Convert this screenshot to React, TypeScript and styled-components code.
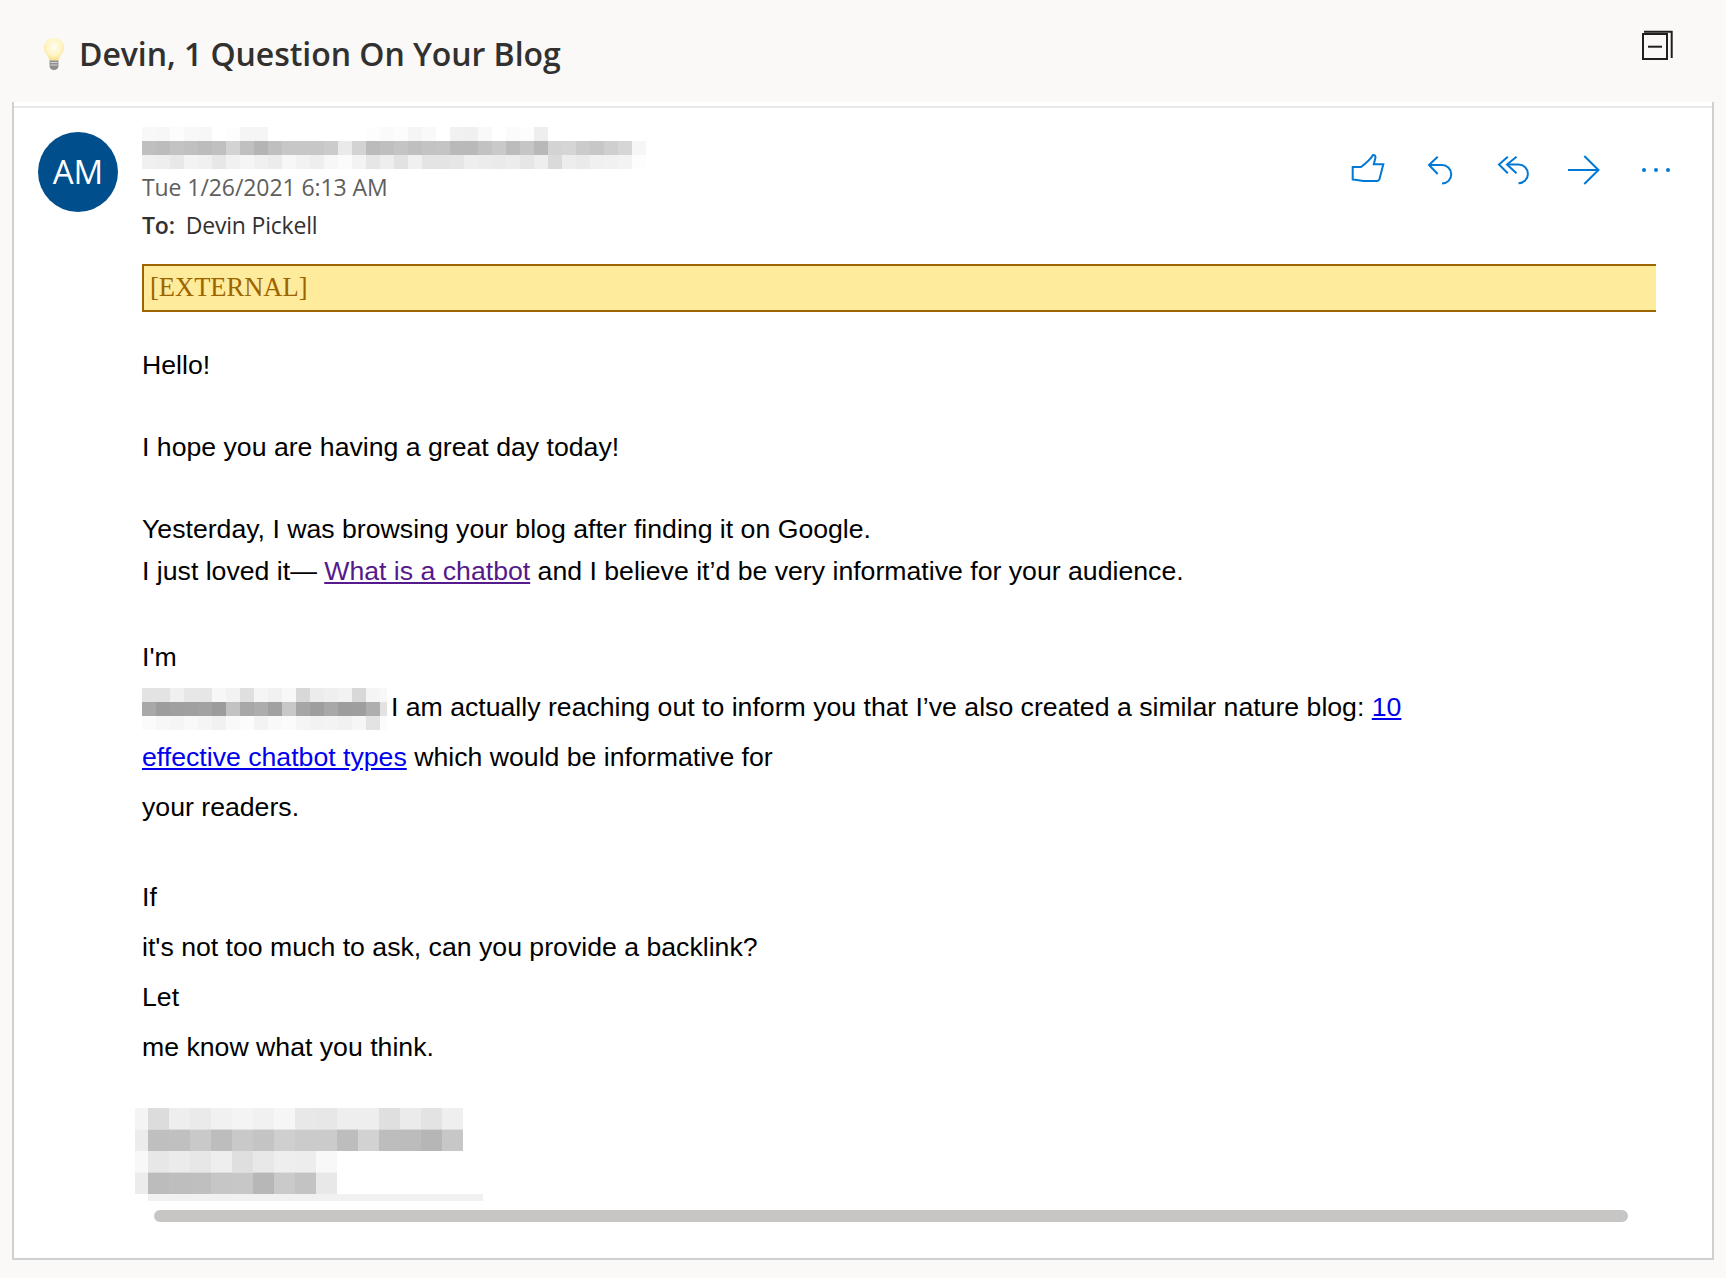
import React from 'react';
import styled, { createGlobalStyle } from 'styled-components';

const GlobalStyle = createGlobalStyle`
  html, body {
    margin: 0;
    padding: 0;
    background: #faf9f7;
  }
`;

const Page = styled.div`
  box-sizing: border-box;
  display: flex;
  flex-direction: column;
  width: 1726px;
  height: 1278px;
  overflow: hidden;
  background: #faf9f7;
  font-family: "Open Sans", "Noto Sans", sans-serif;
`;

const Header = styled.header`
  box-sizing: border-box;
  display: flex;
  align-items: center;
  justify-content: space-between;
  height: 102px;
  padding: 6px 52px 0 44px;
`;

const SubjectGroup = styled.div`
  display: flex;
  align-items: center;
  gap: 15px;
`;

const Subject = styled.h1`
  margin: 0;
  font-size: 32px;
  font-weight: 600;
  line-height: 44px;
  letter-spacing: -0.05px;
  color: #323130;
`;

const Panel = styled.section`
  box-sizing: border-box;
  display: flex;
  align-items: flex-start;
  gap: 24px;
  height: 1158px;
  margin: 0 12px 18px 12px;
  padding: 25px 20px 0 24px;
  background: #fff;
  border-left: 2px solid #d0d0d0;
  border-right: 2px solid #d0d0d0;
  border-bottom: 2px solid #d0d0d0;
  box-shadow: inset 0 4px 0 #fff, inset 0 6px 0 #e9e9e9;
`;

const Avatar = styled.div`
  box-sizing: border-box;
  flex: none;
  display: flex;
  align-items: center;
  justify-content: center;
  width: 80px;
  height: 80px;
  margin-top: 5px;
  padding-bottom: 2px;
  border-radius: 50%;
  background: #004e8c;
  color: #fff;
  font-size: 33px;
  font-weight: 500;
`;

const Message = styled.div`
  flex: 1;
  min-width: 0;
`;

const HeadRow = styled.div`
  display: flex;
  justify-content: space-between;
  align-items: flex-start;
  height: 137px;
`;

const HeadText = styled.div`
  display: flex;
  flex-direction: column;
`;

const DateLine = styled.div`
  margin-top: 2px;
  font-size: 23px;
  line-height: 32px;
  color: #605e5c;
  letter-spacing: -0.08px;
`;

const ToLine = styled.div`
  display: flex;
  gap: 11px;
  margin-top: 6px;
  font-size: 23px;
  line-height: 32px;
  letter-spacing: -0.2px;
  color: #323130;
`;

const ToLabel = styled.span`
  font-weight: 600;
`;

const Actions = styled.div`
  display: flex;
  margin-top: 7px;
`;

const ActionButton = styled.button`
  display: flex;
  align-items: center;
  justify-content: center;
  width: 72px;
  height: 72px;
  padding: 0;
  border: 0;
  background: none;
`;

const Icon = styled.svg`
  display: block;
  fill: none;
  stroke: ${props => props.stroke ?? '#0078d4'};
  stroke-width: 2;
`;

const PopOut = styled(Icon)`
  align-self: flex-start;
  margin-top: 22px;
`;

const Body = styled.div`
  padding-right: 36px;
  font-family: "Liberation Sans", Arial, sans-serif;
  font-size: 26.67px;
  color: #000;
`;

const Banner = styled.div`
  box-sizing: border-box;
  height: 48px;
  padding-left: 6px;
  background: #ffeb9c;
  border: 2px solid #9c6500;
  border-right: 0;
  font-family: "Liberation Serif", "Times New Roman", serif;
  font-size: 26.5px;
  line-height: 43px;
  color: #9c6500;
`;

const Para = styled.div<{ $top: number; $tall?: boolean }>`
  margin-top: ${props => props.$top}px;
  line-height: ${props => (props.$tall ? 50 : 42)}px;
`;

const Line = styled.div`
  white-space: nowrap;
`;

const Visited = styled.a`
  color: #551a8b;
  text-decoration: underline;
`;

const Link = styled.a`
  color: #0000ee;
  text-decoration: underline;
`;

const MosaicBox = styled.svg<{ $inline?: boolean; $shift?: number }>`
  display: ${props => (props.$inline ? 'inline-block' : 'block')};
  vertical-align: ${props => (props.$inline ? '-14px' : 'baseline')};
  margin-left: ${props => props.$shift ?? 0}px;
  margin-right: ${props => (props.$inline ? -3.5 : 0)}px;
  filter: blur(0.5px);
`;

const SignatureWrap = styled.div`
  margin-top: 36px;
`;

const ScrollBar = styled.div`
  width: 1474px;
  height: 12px;
  margin: 9px 0 0 12px;
  border-radius: 6px;
  background: #c8c6c4;
`;

// redacted bits of the mail, one hex grey value per block
const NAME_ROWS = [
  'f8 f7 fc f8 f7 ff fd f5 f5 ff ff ff ff ff ff ff fd fa fc f5 f9 ff f1 f0 f9 ff fb fd ee ff ff ff ff ff ff ff',
  'bf bc c3 c0 bc c0 d3 c0 b4 bf c7 c7 c7 cb ea d3 bb bf c4 bf c3 c4 b9 b9 c2 c9 bc c5 b8 d3 d5 cb c7 cf d6 f6',
  'f0 ee e8 f3 f0 e7 f1 f5 f0 ec f7 f2 ee f7 fb f3 e6 ee e2 f0 e4 e4 e6 ee ec ea ec e6 ee da ed ea f0 f1 f3 fd',
];

const INTRO_ROWS = [
  'e3 e3 f0 e7 e6 f7 f2 df f5 f1 f8 d8 ec ef f2 d8 f5 f8',
  'a8 9d 9f a0 a2 9c c2 a8 ad a1 c8 a6 9e a8 9d 9e ae e2',
  'fb f7 f5 f9 f5 f1 f9 fc f3 f9 fb f5 f2 f3 f1 f6 e3 fb',
];

const SIGNATURE_ROWS = [
  'f4 dc ee ea f1 f4 f1 f6 e8 e7 ee ee df eb e3 ef',
  'ec bf c0 c9 bd c9 c4 cf cb cb bd d2 bd bc b6 c7',
  'f8 e7 eb e7 ee df e8 ee ed f8 ff ff ff ff ff ff',
  'ec bc be bf c6 c7 b7 ca c3 e8 ff ff ff ff ff ff',
];

interface MosaicProps {
  rows: string[];
  cellW: number;
  cellH: number;
  firstW?: number;
  width: number;
  height: number;
  inline?: boolean;
  shift?: number;
  children?: React.ReactNode;
}

function Mosaic({ rows, cellW, cellH, firstW, width, height, inline, shift, children }: MosaicProps) {
  return (
    <MosaicBox $inline={inline} $shift={shift} width={width} height={height} viewBox={`0 0 ${width} ${height}`}>
      {rows.map((row, y) =>
        row.split(' ').map((v, x) => {
          const left = firstW === undefined || x === 0 ? x * cellW : firstW + (x - 1) * cellW;
          const w = firstW !== undefined && x === 0 ? firstW : cellW;
          return <rect key={`${y}-${x}`} x={left} y={y * cellH} width={w} height={cellH} fill={`#${v}${v}${v}`} />;
        })
      )}
      {children}
    </MosaicBox>
  );
}

function Bulb() {
  return (
    <svg width="20" height="32" viewBox="0 0 20 32">
      <defs>
        <radialGradient id="glass" cx="50%" cy="40%" r="60%">
          <stop offset="0%" stopColor="#fffdf0" />
          <stop offset="65%" stopColor="#fff4c4" />
          <stop offset="100%" stopColor="#f8dc88" />
        </radialGradient>
      </defs>
      <path d="M10 0C4.4 0 0 4.3 0 9.8c0 5.2 4.4 7.6 5.6 12.7h8.8C15.6 17.4 20 15 20 9.8 20 4.3 15.6 0 10 0Z" fill="url(#glass)" />
      <path d="M5.6 22.5h8.8v6c0 1.8-2 3.5-4.4 3.5s-4.4-1.7-4.4-3.5Z" fill="#8c8c8c" />
      <path d="M6.5 24.5h7M6.5 27h7" stroke="#d8d8d8" strokeWidth="1" />
    </svg>
  );
}

export default function App() {
  return (
    <Page>
      <GlobalStyle />
      <Header>
        <SubjectGroup>
          <Bulb />
          <Subject>Devin, 1 Question On Your Blog</Subject>
        </SubjectGroup>
        <PopOut stroke="#201f1e" width="34" height="34" viewBox="0 0 34 34">
          <rect x="3" y="6" width="24" height="25" />
          <path d="M4 3.7H31.7V30" />
          <path d="M8 18.7H22" />
        </PopOut>
      </Header>
      <Panel>
        <Avatar>AM</Avatar>
        <Message>
          <HeadRow>
            <HeadText>
              <Mosaic rows={NAME_ROWS} cellW={14} cellH={14} width={504} height={42} />
              <DateLine>Tue 1/26/2021 6:13 AM</DateLine>
              <ToLine>
                <ToLabel>To:</ToLabel>
                <span>Devin Pickell</span>
              </ToLine>
            </HeadText>
            <Actions>
              <ActionButton aria-label="Like">
                <Icon width="34" height="34" viewBox="0 0 34 34">
                  <path d="M1.7 14H10C14 11 19 7 22 2C23.5 1.5 24.5 3 24.5 4.5L22.8 11.3H32.3L28.5 26C28 27.5 27 28 25.5 28H13C9 28 6 26.5 1.7 26.5Z" />
                </Icon>
              </ActionButton>
              <ActionButton aria-label="Reply">
                <Icon width="28" height="32" viewBox="0 0 28 32">
                  <path d="M11.7 2.7L3 11L11.7 20" />
                  <path d="M3 11H16A9.3 9.3 0 0 1 16 29.6" />
                </Icon>
              </ActionButton>
              <ActionButton aria-label="Reply all">
                <Icon width="34" height="32" viewBox="-1.5 0 34 32">
                  <path d="M11.3 2.7L2.5 10.5L11.3 19.3" />
                  <path d="M20 2.7L10.5 10.5L20 19.3" />
                  <path d="M10.5 10.5H22A9.4 9.4 0 0 1 22 29.3" />
                </Icon>
              </ActionButton>
              <ActionButton aria-label="Forward">
                <Icon width="36" height="32" viewBox="0 0 36 32">
                  <path d="M2 16H33" />
                  <path d="M18.3 2L32.5 16L18.3 30" />
                </Icon>
              </ActionButton>
              <ActionButton aria-label="More">
                <svg width="32" height="8" viewBox="0 0 32 8" fill="#0078d4">
                  <circle cx="4" cy="4" r="2" />
                  <circle cx="16" cy="4" r="2" />
                  <circle cx="28" cy="4" r="2" />
                </svg>
              </ActionButton>
            </Actions>
          </HeadRow>
          <Body>
            <Banner>[EXTERNAL]</Banner>
            <Para $top={32}>
              <Line>Hello!</Line>
            </Para>
            <Para $top={40}>
              <Line>I hope you are having a great day today!</Line>
            </Para>
            <Para $top={40}>
              <Line>Yesterday, I was browsing your blog after finding it on Google.</Line>
              <Line>
                I just loved it— <Visited>What is a chatbot</Visited> and I believe it’d be very informative for your audience.
              </Line>
            </Para>
            <Para $top={40} $tall>
              <Line>I'm</Line>
              <Line>
                <Mosaic rows={INTRO_ROWS} cellW={14} cellH={14} width={245} height={42} inline />{' '}
                I am actually reaching out to inform you that I’ve also created a similar nature blog: <Link>10</Link>
              </Line>
              <Line>
                <Link>effective chatbot types</Link> which would be informative for
              </Line>
              <Line>your readers.</Line>
            </Para>
            <Para $top={40} $tall>
              <Line>If</Line>
              <Line>it's not too much to ask, can you provide a backlink?</Line>
              <Line>Let</Line>
              <Line>me know what you think.</Line>
            </Para>
            <SignatureWrap>
              <Mosaic rows={SIGNATURE_ROWS} cellW={21} cellH={21.5} firstW={13} width={348} height={93} shift={-7}>
                <rect x="13" y="86" width="335" height="7" fill="#f1f1f1" />
              </Mosaic>
            </SignatureWrap>
            <ScrollBar />
          </Body>
        </Message>
      </Panel>
    </Page>
  );
}
